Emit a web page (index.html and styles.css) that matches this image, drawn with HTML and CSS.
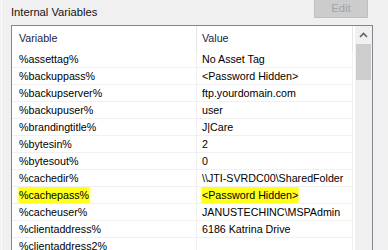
FILE: index.html
```html
<!DOCTYPE html>
<html lang="en">
<head>
    <meta charset="UTF-8">
    <title>Internal Variables</title>
    <link rel="stylesheet" href="styles.css">
</head>
<body>
    <div class="window">
        <div class="topbar">
            <span class="title">Internal Variables</span>
            <button class="edit-btn" disabled>Edit</button>
        </div>

        <div class="list">
            <div class="table">
                <div class="row head">
                    <div class="cell">Variable</div>
                    <div class="cell">Value</div>
                </div>
                <div class="row"><div class="cell">%assettag%</div><div class="cell">No Asset Tag</div></div>
                <div class="row"><div class="cell">%backuppass%</div><div class="cell">&lt;Password Hidden&gt;</div></div>
                <div class="row"><div class="cell">%backupserver%</div><div class="cell">ftp.yourdomain.com</div></div>
                <div class="row"><div class="cell">%backupuser%</div><div class="cell">user</div></div>
                <div class="row"><div class="cell">%brandingtitle%</div><div class="cell">J|Care</div></div>
                <div class="row"><div class="cell">%bytesin%</div><div class="cell">2</div></div>
                <div class="row"><div class="cell">%bytesout%</div><div class="cell">0</div></div>
                <div class="row"><div class="cell">%cachedir%</div><div class="cell">\\JTI-SVRDC00\SharedFolder</div></div>
                <div class="row"><div class="cell"><span class="marker">%cachepass%</span></div><div class="cell"><span class="marker">&lt;Password Hidden&gt;</span></div></div>
                <div class="row"><div class="cell">%cacheuser%</div><div class="cell">JANUSTECHINC\MSPAdmin</div></div>
                <div class="row"><div class="cell">%clientaddress%</div><div class="cell">6186 Katrina Drive</div></div>
                <div class="row"><div class="cell">%clientaddress2%</div><div class="cell"></div></div>
            </div>

            <div class="scrollbar">
                <div class="arrow">
                    <svg width="9" height="6" viewBox="0 0 9 6">
                        <path d="M1 5 L4.5 1.5 L8 5" fill="none" stroke="#606060" stroke-width="1.6"/>
                    </svg>
                </div>
                <div class="thumb"></div>
            </div>
        </div>
    </div>
</body>
</html>
```

FILE: styles.css
```css
html, body {
    margin: 0;
    padding: 0;
    background: #f0f0f0;
}
body {
    width: 388px;
    height: 250px;
    overflow: hidden;
    padding-left: 1px;
    box-sizing: border-box;
    font-family: "Liberation Sans", Arial, sans-serif;
    font-size: 10.7px;
    color: #000;
}
.window {
    border-left: 1px solid #fbfbfb;
    height: 100%;
    padding-left: 9px;
}
.topbar {
    display: flex;
    align-items: flex-start;
    height: 25px;
}
.title {
    font-size: 11.2px;
    line-height: 24px;
    color: #111;
}
.edit-btn {
    margin-left: auto;
    margin-right: 20px;
    margin-top: -2px;
    width: 54px;
    height: 20px;
    padding: 0;
    background: #cccccc;
    border: 1px solid #bfbfbf;
    color: #a3a3a3;
    font-family: "Liberation Sans", Arial, sans-serif;
    font-size: 11.2px;
    line-height: 18px;
}
.list {
    display: flex;
    width: 362px;
    height: 240px;
    box-sizing: border-box;
    border: 1px solid #828790;
    border-bottom: none;
    background: #fff;
}
.table {
    width: 343px;
}
.row {
    display: grid;
    grid-template-columns: 185px 156px;
    height: 17px;
    box-sizing: border-box;
    border-bottom: 1px solid #f0f0f0;
    line-height: 16px;
}
.row .cell {
    border-right: 1px solid #f0f0f0;
    padding-left: 7px;
    white-space: nowrap;
    overflow: hidden;
}
.row .cell + .cell {
    padding-left: 5px;
}
.row.head {
    height: 25px;
    line-height: 25px;
    border-bottom: none;
    color: #1b1b3a;
}
.row.head .cell {
    border-right-color: #e5e5e5;
}
.marker {
    background: #ffff1a;
    box-shadow: 0 0 2px 1px #ffff40;
    padding: 2px 0;
}
.scrollbar {
    width: 17px;
    margin-left: 2px;
    background: #f0f0f0;
}
.arrow {
    height: 17px;
    display: flex;
    align-items: center;
    justify-content: center;
}
.thumb {
    height: 36px;
    margin: 1px 1px 0;
    background: #cdcdcd;
}
```
